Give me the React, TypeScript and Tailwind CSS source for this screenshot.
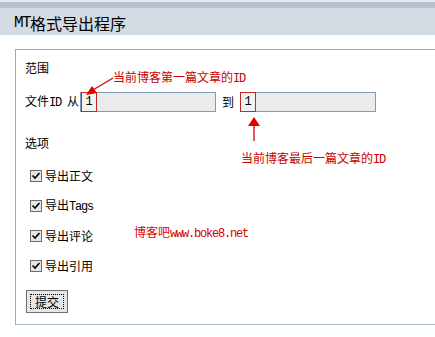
import React from "react";

const L = ({ children, size = 12 }: { children: React.ReactNode; size?: number }) => (
  <span
    className={size === 16 ? "font-['Liberation_Mono',monospace] tracking-[-1.6px]" : "font-['Liberation_Mono',monospace] tracking-[-1.2px]"}
  >
    {children}
  </span>
);

const Check = () => (
  <svg width="12" height="12" viewBox="0 0 12 12" className="shrink-0">
    <rect x="0.5" y="0.5" width="11" height="11" fill="#e6e6e6" stroke="#6a6a6a" />
    <path d="M2.5 5.5 L5 8 L9.5 3" fill="none" stroke="#000" strokeWidth="1.6" />
  </svg>
);

const IdInput = ({ boxLeft }: { boxLeft: string }) => (
  <div className="relative w-[136px] h-[20px] border border-[#7f9db9] bg-[#ebebeb]">
    <div
      className={`absolute -top-px ${boxLeft} w-[16px] h-[20px] border border-[#c02828] bg-[#f2f2f2] flex items-center justify-center text-[12px] leading-[12px] font-['Liberation_Mono',monospace]`}
    >
      1
    </div>
  </div>
);

const Row = ({ children }: { children: React.ReactNode }) => (
  <div className="flex items-center h-[14px] ml-[5px] gap-[3px]">
    <Check />
    <span className="leading-[14px]">{children}</span>
  </div>
);

export default function App() {
  return (
    <div className="relative w-[435px] h-[337px] overflow-hidden bg-white text-[12px] text-black font-['Noto_Sans_CJK_SC',sans-serif]">
      <div className="h-[2px] bg-[#e2e8ed]" />
      <div className="h-[6px] bg-[#b4c2ce]" />
      <div className="h-[27px] bg-[#d3dbe3] flex items-center pl-[14px] pt-[3px] text-[16px] leading-[16px]">
        <L size={16}>MT</L>格式导出程序
      </div>

      <div className="mt-[14px] ml-[15px] w-[440px] h-[276px] border border-[#a3a8ad] border-b-[#a9bbcb] pt-[12px] pl-[9px] flex flex-col">
        <div className="leading-[12px]">范围</div>
        <div className="flex items-center mt-[18px] h-[20px]">
          <span className="leading-[12px]">
            文件<L>ID </L>从
          </span>
          <div className="ml-[1px]">
            <IdInput boxLeft="left-0" />
          </div>
          <span className="ml-[6px] leading-[12px]">到</span>
          <div className="ml-[6px]">
            <IdInput boxLeft="-left-px" />
          </div>
        </div>
        <div className="mt-[25px] leading-[12px]">选项</div>
        <div className="mt-[20px] flex flex-col gap-[16px]">
          <Row>导出正文</Row>
          <Row>
            导出<L>Tags</L>
          </Row>
          <Row>导出评论</Row>
          <Row>导出引用</Row>
        </div>
        <div className="mt-[17px] ml-[1px]">
          <button className="w-[42px] h-[23px] border border-[#707070] bg-[#e6e6e6] p-[3px] flex">
            <span className="flex-1 border border-dotted border-black flex items-center justify-center text-[12px] leading-[12px]">
              提交
            </span>
          </button>
        </div>
      </div>

      {/* annotations */}
      <div className="absolute left-[113px] top-[71px] text-[#c80000] leading-[12px] whitespace-nowrap">
        当前博客第一篇文章的<L>ID</L>
      </div>
      <div className="absolute left-[241px] top-[152px] text-[#c80000] leading-[12px] whitespace-nowrap">
        当前博客最后一篇文章的<L>ID</L>
      </div>
      <div className="absolute left-[134px] top-[226px] leading-[12px] whitespace-nowrap">
        <span className="text-[#e00000]">博客吧</span>
        <span className="text-[#d00000]">
          <L>www.boke8.net</L>
        </span>
      </div>
      <svg className="absolute left-0 top-0 pointer-events-none" width="435" height="337">
        <line x1="113" y1="78" x2="93" y2="90" stroke="#d40000" strokeWidth="1.3" />
        <polygon points="86,95 97,93 92,86" fill="#e00000" />
        <polygon points="254,117 248,126 260,126" fill="#e00000" />
        <line x1="254" y1="126" x2="254" y2="141" stroke="#d40000" strokeWidth="1.3" />
      </svg>
    </div>
  );
}
